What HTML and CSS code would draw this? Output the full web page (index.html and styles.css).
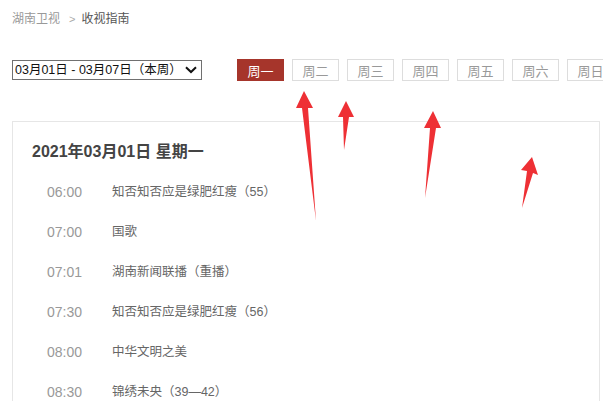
FILE: index.html
```html
<!DOCTYPE html>
<html lang="zh-CN">
<head>
<meta charset="utf-8">
<title>收视指南</title>
<link rel="stylesheet" href="styles.css">
</head>
<body>
<div class="page">
  <div class="crumb"><a class="crumb-link">湖南卫视</a><span class="crumb-sep">&gt;</span><span class="crumb-cur">收视指南</span></div>
  <div class="toolbar">
    <div class="select-wrap">
      <select class="week-select">
        <option>03月01日 - 03月07日（本周）</option>
      </select>
      <svg class="chev" width="12" height="8" viewBox="0 0 12 8"><path d="M1 1.2 L6 6 L11 1.2" fill="none" stroke="#111" stroke-width="2"/></svg>
    </div>
    <div class="days">
      <span class="day active">周一</span>
      <span class="day">周二</span>
      <span class="day">周三</span>
      <span class="day">周四</span>
      <span class="day">周五</span>
      <span class="day">周六</span>
      <span class="day">周日</span>
    </div>
  </div>
  <div class="card">
    <h2 class="date-title">2021年03月01日 星期一</h2>
    <ul class="prog-list">
      <li class="prog"><span class="time">06:00</span><span class="name">知否知否应是绿肥红瘦（55）</span></li>
      <li class="prog"><span class="time">07:00</span><span class="name">国歌</span></li>
      <li class="prog"><span class="time">07:01</span><span class="name">湖南新闻联播（重播）</span></li>
      <li class="prog"><span class="time">07:30</span><span class="name">知否知否应是绿肥红瘦（56）</span></li>
      <li class="prog"><span class="time">08:00</span><span class="name">中华文明之美</span></li>
      <li class="prog last"><span class="time">08:30</span><span class="name">锦绣未央（39—42）</span></li>
    </ul>
  </div>
</div>
<svg class="annot" width="603" height="401" viewBox="0 0 603 401">
  <g fill="#ee3035">
    <polygon points="304,91 313,108 308,108 316,221 302,108 296,108"/>
    <polygon points="346,101 354,117 349,117 344,150 343,117 338,117"/>
    <polygon points="433,111 441,128 436,128 425,198 430,128 424,128"/>
    <polygon points="532,157 538,175 533,173 522,208 527,171 521,170"/>
  </g>
</svg>
</body>
</html>
```
FILE: styles.css
```css
html, body {
  margin: 0;
  padding: 0;
  background: #fff;
  overflow: hidden;
}
body {
  font-family: "Liberation Sans", "Noto Sans CJK SC", sans-serif;
  font-size: 13px;
  color: #555;
}
.page {
  padding-left: 12px;
  height: 401px;
  overflow: hidden;
}
.crumb {
  height: 38px;
  line-height: 38px;
  font-size: 12px;
  color: #999;
  display: flex;
  align-items: center;
}
.crumb-link {
  color: #999;
}
.crumb-sep {
  margin: 0 6px 0 9px;
  color: #aaa;
  font-size: 11px;
}
.crumb-cur {
  color: #555;
}
.toolbar {
  margin-top: 21px;
  height: 22px;
  display: flex;
  align-items: center;
}
.select-wrap {
  position: relative;
  width: 190px;
  height: 20px;
}
.week-select {
  appearance: none;
  -webkit-appearance: none;
  width: 190px;
  height: 20px;
  margin: 0;
  padding: 0 0 0 2px;
  border: 1px solid #707070;
  border-radius: 0;
  background: #fff;
  font-family: "Liberation Sans", "Noto Sans CJK SC", sans-serif;
  font-size: 12.5px;
  color: #111;
  box-sizing: border-box;
}
.chev {
  position: absolute;
  right: 5px;
  top: 6px;
  pointer-events: none;
}
.days {
  display: flex;
  gap: 8px;
  margin-left: 35px;
}
.day {
  width: 47px;
  height: 22px;
  box-sizing: border-box;
  border: 1px solid #ddd;
  color: #999;
  font-size: 13px;
  display: flex;
  align-items: center;
  justify-content: center;
  flex-shrink: 0;
}
.day.active {
  background: #a6352b;
  border-color: #a6352b;
  color: #fff;
}
.card {
  margin-top: 40px;
  width: 588px;
  box-sizing: border-box;
  border: 1px solid #e6e6e6;
  padding: 18px 19px 0;
  height: 300px;
}
.date-title {
  margin: 0;
  font-size: 16px;
  line-height: 24px;
  font-weight: bold;
  color: #444;
}
.prog-list {
  list-style: none;
  margin: 8px 0 0;
  padding: 0;
}
.prog {
  display: flex;
  height: 40px;
  line-height: 40px;
}
.prog.last {
  height: 30px;
  line-height: 40px;
}
.time {
  width: 65px;
  padding-left: 15px;
  color: #999;
  font-size: 14px;
}
.name {
  color: #666;
  font-size: 12.5px;
}
.annot {
  position: absolute;
  left: 0;
  top: 0;
  pointer-events: none;
}
```
